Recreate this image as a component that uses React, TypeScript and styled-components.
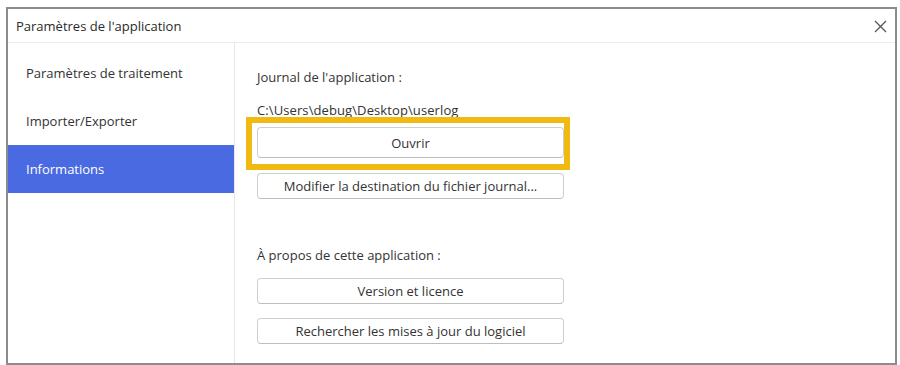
import { ReactElement } from "react";
import styled, { createGlobalStyle } from "styled-components";

const GlobalStyle = createGlobalStyle`
  html, body {
    margin: 0;
    padding: 0;
    background: #fff;
  }
  body {
    font-family: "Open Sans", "Noto Sans", sans-serif;
    color: #333;
  }
`;

const menuItems = ["Paramètres de traitement", "Importer/Exporter", "Informations"];

export const App = (): ReactElement => {
  const selected = "Informations";
  return (
    <>
      <GlobalStyle />
      <Page>
        <Dialog>
          <TitleBar>
            <Title>Paramètres de l'application</Title>
            <CloseButton aria-label="Fermer">
              <svg width="13" height="13" viewBox="0 0 13 13">
                <path
                  d="M1 1 L12 12 M12 1 L1 12"
                  stroke="#555"
                  strokeWidth="1.3"
                  fill="none"
                />
              </svg>
            </CloseButton>
          </TitleBar>
          <Body>
            <Sidebar>
              {menuItems.map((item) => (
                <MenuItem key={item} $active={item === selected}>
                  {item}
                </MenuItem>
              ))}
            </Sidebar>
            <Content>
              <Label>Journal de l'application :</Label>
              <Path>C:\Users\debug\Desktop\userlog</Path>
              <Highlighted>
                <Button $tall>Ouvrir</Button>
                <Marker />
              </Highlighted>
              <Button>Modifier la destination du fichier journal...</Button>
              <Label $spaced>À propos de cette application :</Label>
              <Button>Version et licence</Button>
              <Button>Rechercher les mises à jour du logiciel</Button>
            </Content>
          </Body>
        </Dialog>
      </Page>
    </>
  );
};

export default App;

const Page = styled.div`
  padding: 7px 3px 0 6px;
  height: 365px;
  box-sizing: border-box;
  overflow: hidden;
`;

const Dialog = styled.div`
  width: 891px;
  height: 358px;
  box-sizing: border-box;
  border: 2px solid #8c8c8c;
  background: #fff;
  display: flex;
  flex-direction: column;
`;

const TitleBar = styled.div`
  height: 33px;
  flex-shrink: 0;
  display: flex;
  align-items: center;
  justify-content: space-between;
  padding: 0 5px 0 8px;
  border-bottom: 1px solid #ececec;
`;

const Title = styled.span`
  font-size: 13px;
  color: #2a2a2a;
  letter-spacing: 0;
`;

const CloseButton = styled.button`
  border: 0;
  background: transparent;
  padding: 0;
  width: 20px;
  height: 20px;
  display: flex;
  align-items: center;
  justify-content: center;
  margin-top: 2px;
`;

const Body = styled.div`
  flex: 1;
  display: flex;
  min-height: 0;
`;

const Sidebar = styled.div`
  width: 226px;
  flex-shrink: 0;
  border-right: 1px solid #e6e6e6;
  padding-top: 6px;
  display: flex;
  flex-direction: column;
`;

const MenuItem = styled.div<{ $active?: boolean }>`
  height: 48px;
  display: flex;
  align-items: center;
  padding-left: 18px;
  font-size: 13px;
  color: ${(p) => (p.$active ? "#fff" : "#333")};
  background: ${(p) => (p.$active ? "#4a6ae2" : "transparent")};
`;

const Content = styled.div`
  flex: 1;
  padding: 26px 0 0 22px;
  display: flex;
  flex-direction: column;
  align-items: flex-start;
`;

const Label = styled.div<{ $spaced?: boolean }>`
  font-size: 13px;
  line-height: 16px;
  color: #333;
  margin-top: ${(p) => (p.$spaced ? "34px" : "0")};
  margin-bottom: ${(p) => (p.$spaced ? "15px" : "17px")};
`;

const Path = styled.div`
  font-size: 13px;
  line-height: 16px;
  letter-spacing: 0.1px;
  color: #333;
  margin-bottom: 9px;
`;

const Highlighted = styled.div`
  position: relative;
  margin-bottom: 15px;
`;

const Marker = styled.div`
  position: absolute;
  top: -10px;
  left: -11px;
  right: -6px;
  bottom: -12px;
  border: 6px solid #f1ba12;
  pointer-events: none;
`;

const Button = styled.button<{ $tall?: boolean }>`
  width: 307px;
  height: ${(p) => (p.$tall ? "31px" : "26px")};
  margin-bottom: 14px;
  border: 1px solid #cfcfcf;
  border-bottom-color: #bdbdbd;
  border-radius: 4px;
  background: #fff;
  font-family: "Open Sans", "Noto Sans", sans-serif;
  font-size: 13px;
  color: #333;
  padding: 0;
  display: flex;
  align-items: center;
  justify-content: center;

  ${Highlighted} & {
    margin-bottom: 0;
  }
`;
